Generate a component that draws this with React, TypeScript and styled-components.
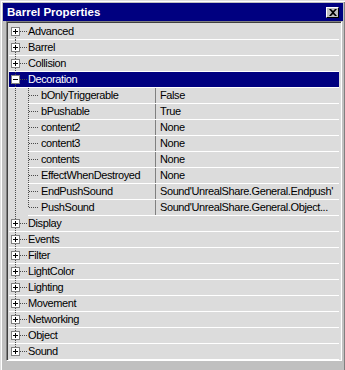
import React from 'react';
import styled, { createGlobalStyle, css } from 'styled-components';

const GlobalStyle = createGlobalStyle`
  html, body {
    margin: 0;
    padding: 0;
    background: #c0c0c0;
  }
  body {
    font-family: "Liberation Sans", Arial, sans-serif;
    font-size: 11px;
  }
`;

const DOT = '#4a4a4a';

const vDots = css`
  background-image: linear-gradient(to bottom, ${DOT} 50%, transparent 50%);
  background-size: 1px 2px;
`;

const hDots = css`
  background-image: linear-gradient(to right, ${DOT} 50%, transparent 50%);
  background-size: 2px 1px;
`;

const Window = styled.div`
  width: 345px;
  height: 370px;
  box-sizing: border-box;
  background: #c0c0c0;
  padding: 2px 2px 0 2px;
  border-top: 1px solid #dfdfdf;
  border-left: 1px solid #dfdfdf;
  box-shadow: inset 1px 1px 0 #fff, inset -1px 0 0 #808080;
  display: flex;
  flex-direction: column;
`;

const TitleBar = styled.div`
  height: 18px;
  background: #000080;
  color: #fff;
  font-weight: bold;
  font-size: 11.5px;
  display: flex;
  align-items: center;
  justify-content: space-between;
  padding: 0 4px 0 4px;
`;

const CloseButton = styled.div`
  width: 11px;
  height: 9px;
  background: #c0c0c0;
  border-top: 1px solid #fff;
  border-left: 1px solid #fff;
  border-right: 1px solid #000;
  border-bottom: 1px solid #000;
  display: flex;
  align-items: center;
  justify-content: center;
`;

const Panel = styled.div`
  width: 336px;
  height: 340px;
  box-sizing: border-box;
  margin-left: 3px;
  border-top: 1px solid #808080;
  border-left: 1px solid #808080;
  border-right: 1px solid #fff;
  border-bottom: 1px solid #fff;
  box-shadow: inset 1px 1px 0 #404040, inset -1px -1px 0 #dfdfdf;
  padding: 2px;
  background: #dcdcdc;
`;

const Row = styled.div<{ $selected?: boolean; $lineFrom: number }>`
  height: 16px;
  display: flex;
  color: ${p => (p.$selected ? '#fff' : '#000')};
  background: linear-gradient(#fff, #fff) ${p => p.$lineFrom}px 100% / 100% 1px no-repeat,
    ${p => (p.$selected ? '#000080' : '#dcdcdc')};
`;

const Gutter = styled.div<{ $first?: boolean; $last?: boolean }>`
  position: relative;
  width: 19px;
  flex-shrink: 0;

  &::before {
    content: '';
    position: absolute;
    left: 6px;
    width: 1px;
    top: ${p => (p.$first ? '7px' : '0')};
    bottom: ${p => (p.$last ? '9px' : '0')};
    ${vDots}
  }

  &::after {
    content: '';
    position: absolute;
    left: 11px;
    width: 7px;
    top: 7px;
    height: 1px;
    ${hDots}
  }
`;

const Expander = styled.div`
  position: absolute;
  left: 2px;
  top: 3px;
  width: 7px;
  height: 7px;
  border: 1px solid #808080;
  background: #fff;
  z-index: 1;

  &::before {
    content: '';
    position: absolute;
    left: 1px;
    top: 3px;
    width: 5px;
    height: 1px;
    background: #000;
  }
`;

const PlusBar = styled.span`
  position: absolute;
  left: 3px;
  top: 1px;
  width: 1px;
  height: 5px;
  background: #000;
`;

const ChildGutter = styled.div<{ $last?: boolean }>`
  position: relative;
  width: 32px;
  flex-shrink: 0;

  &::before {
    content: '';
    position: absolute;
    left: 6px;
    width: 1px;
    top: 0;
    bottom: 0;
    ${vDots}
  }

  &::after {
    content: '';
    position: absolute;
    left: 19px;
    width: 1px;
    top: 0;
    bottom: ${p => (p.$last ? '8px' : '0')};
    ${vDots}
  }
`;

const Branch = styled.span`
  position: absolute;
  left: 20px;
  top: 7px;
  width: 10px;
  height: 1px;
  ${hDots}
`;

const Label = styled.div`
  height: 15px;
  line-height: 15px;
  white-space: nowrap;
  letter-spacing: -0.4px;
`;

const NameCell = styled(Label)`
  width: 114px;
  flex-shrink: 0;
  overflow: hidden;
`;

const ValueCell = styled(Label)`
  flex: 1;
  min-width: 0;
  border-left: 1px solid #808080;
  padding-left: 4px;
`;

const groups = [
  'Advanced',
  'Barrel',
  'Collision',
  'Decoration',
  'Display',
  'Events',
  'Filter',
  'LightColor',
  'Lighting',
  'Movement',
  'Networking',
  'Object',
  'Sound',
];

const decoration: [string, string][] = [
  ['bOnlyTriggerable', 'False'],
  ['bPushable', 'True'],
  ['content2', 'None'],
  ['content3', 'None'],
  ['contents', 'None'],
  ['EffectWhenDestroyed', 'None'],
  ['EndPushSound', "Sound'UnrealShare.General.Endpush'"],
  ['PushSound', "Sound'UnrealShare.General.Object..."],
];

const CloseIcon = () => (
  <svg width="8" height="7" viewBox="0 0 8 7">
    <path d="M0 0h2l2 2 2-2h2L5 3.5 8 7H6L4 5 2 7H0l3-3.5z" fill="#000" />
  </svg>
);

export default () => {
  return (
    <>
      <GlobalStyle />
      <Window>
        <TitleBar>
          <span>Barrel Properties</span>
          <CloseButton>
            <CloseIcon />
          </CloseButton>
        </TitleBar>

        <Panel>
          {groups.map((name, i) => {
            const open = name === 'Decoration';
            return (
              <React.Fragment key={name}>
                <Row $selected={open} $lineFrom={0}>
                  <Gutter $first={i === 0} $last={i === groups.length - 1}>
                    <Expander>{!open && <PlusBar />}</Expander>
                  </Gutter>
                  <Label>{name}</Label>
                </Row>

                {open &&
                  decoration.map(([prop, value], j) => (
                    <Row key={prop} $lineFrom={19}>
                      <ChildGutter $last={j === decoration.length - 1}>
                        <Branch />
                      </ChildGutter>
                      <NameCell>{prop}</NameCell>
                      <ValueCell>{value}</ValueCell>
                    </Row>
                  ))}
              </React.Fragment>
            );
          })}
        </Panel>
      </Window>
    </>
  );
};
